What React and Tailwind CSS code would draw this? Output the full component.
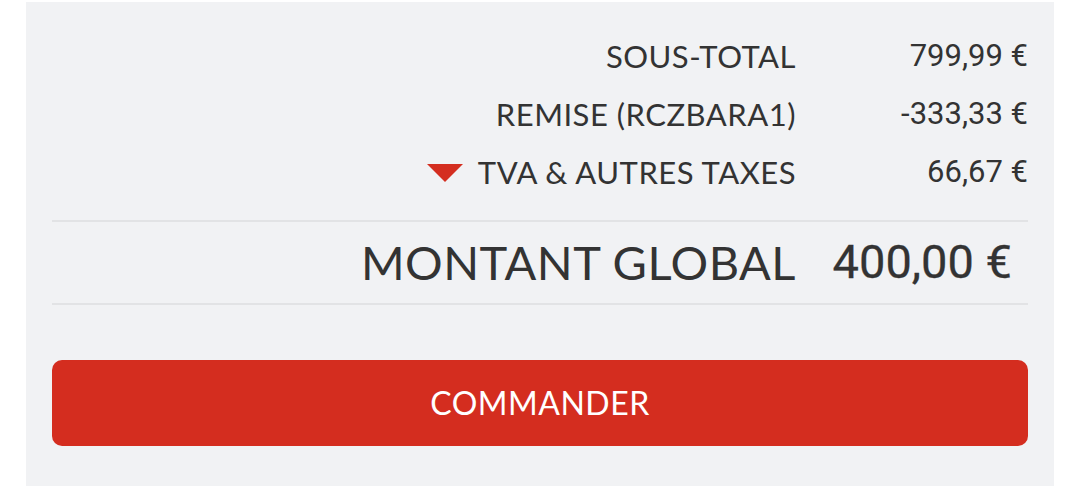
import React from 'react';

const rows = [
  { label: 'SOUS-TOTAL', value: '799,99 €' },
  { label: 'REMISE (RCZBARA1)', value: '-333,33 €' },
  { label: 'TVA & AUTRES TAXES', value: '66,67 €', toggle: true },
];

const Row = ({ label, value, toggle }) => (
  <div className="flex items-center justify-end h-[58px]">
    <div className="flex items-center gap-[15px]">
      {toggle && (
        <svg width="36" height="18" viewBox="0 0 36 18" className="mt-[2px]">
          <polygon points="0,0 36,0 18,18" fill="#d42e20" />
        </svg>
      )}
      <span className="font-['Lato',sans-serif] text-[31px] tracking-[0.5px] text-[#333]">{label}</span>
    </div>
    <span className="w-[232px] text-right font-['Roboto',sans-serif] text-[31px] text-[#333]">{value}</span>
  </div>
);

export default function App() {
  return (
    <div className="w-[1080px] h-[486px] bg-white overflow-hidden pt-[2px]">
      <div className="mx-[26px] h-[484px] bg-[#f1f2f4] px-[26px] pt-[25px]">
        {rows.map((r) => (
          <Row key={r.label} {...r} />
        ))}
        <div className="mt-[19px] border-t-2 border-b-2 border-[#e2e3e5] h-[85px] flex items-center justify-end">
          <span className="font-['Lato',sans-serif] text-[47px] tracking-[0.5px] text-[#333]">MONTANT GLOBAL</span>
          <span className="w-[232px] pr-[16px] text-right font-['Roboto',sans-serif] text-[47px] text-[#333] [-webkit-text-stroke:0.3px_#333]">400,00 €</span>
        </div>
        <button className="mt-[55px] w-full h-[86px] rounded-[10px] bg-[#d42d1f] text-white font-['Lato',sans-serif] text-[32px] tracking-[0.5px]">
          COMMANDER
        </button>
      </div>
    </div>
  );
}
